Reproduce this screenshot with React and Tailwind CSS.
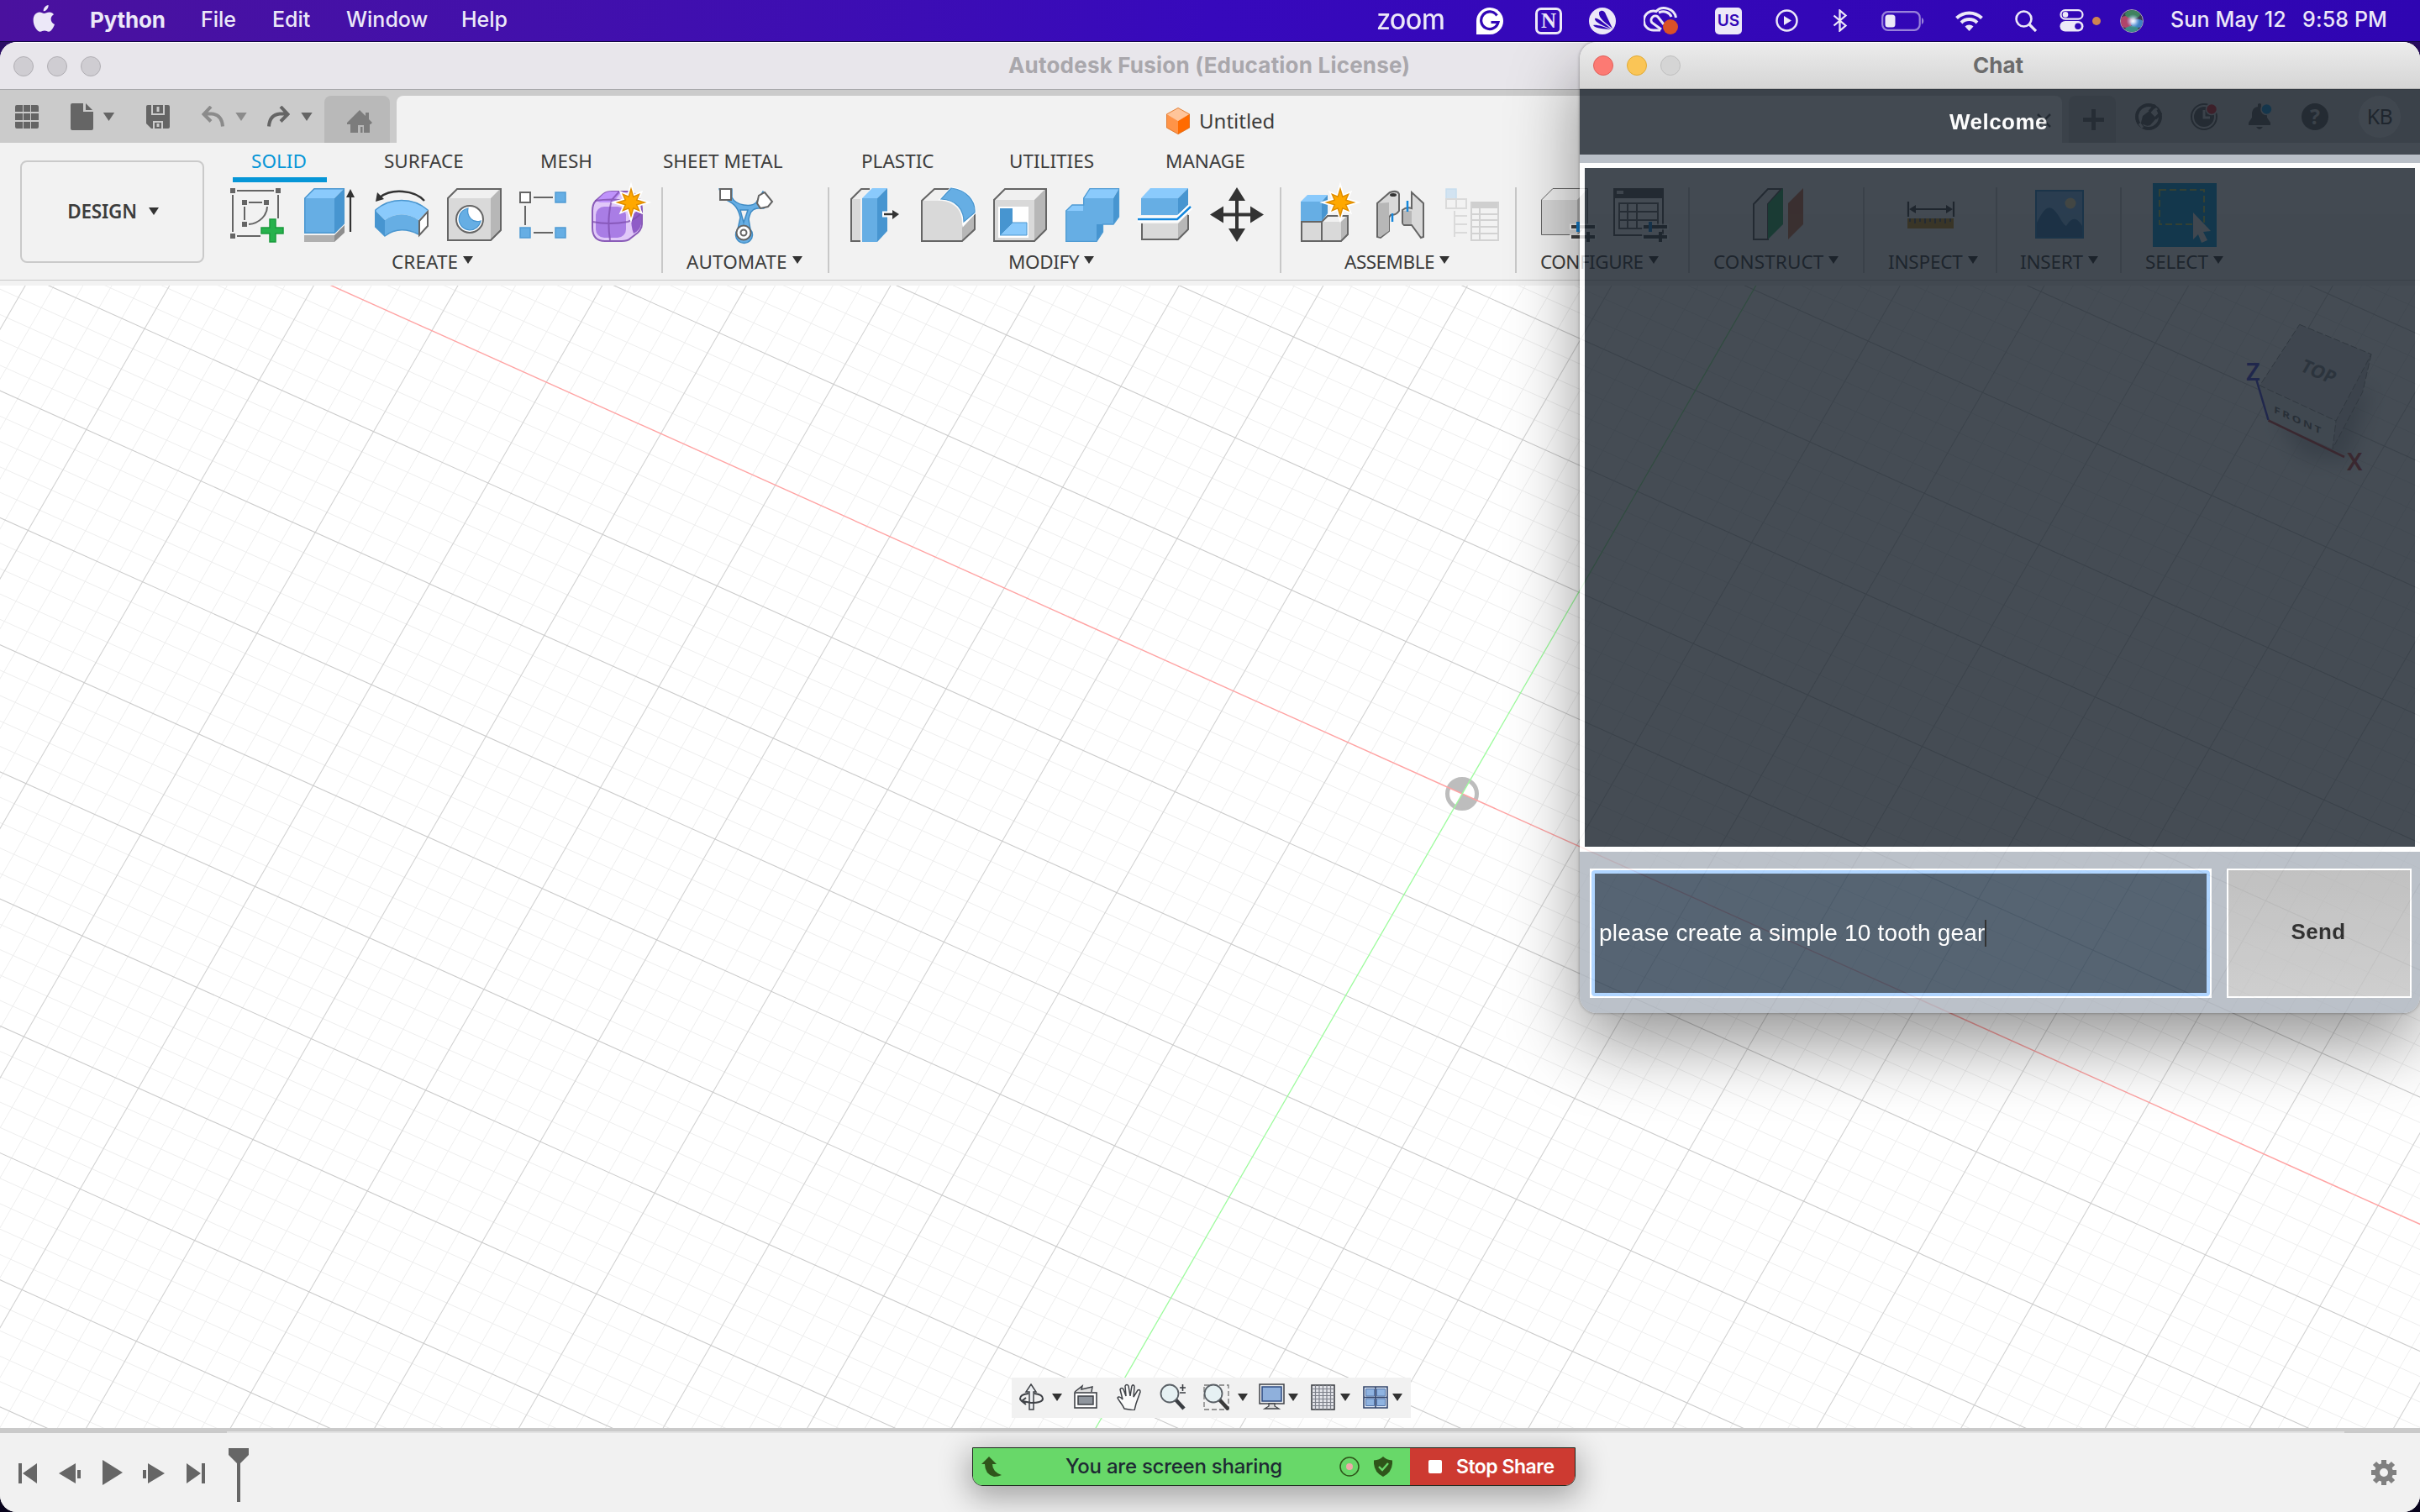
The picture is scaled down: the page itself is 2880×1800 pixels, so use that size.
import React from "react";

const MAC = "font-['Inter',sans-serif]";
const UI = "font-['Noto_Sans',sans-serif]";

/* ---------- menu bar ---------- */

const menus = [
  { label: "Python", cls: "w-[132px] text-[26px] font-bold tracking-[-0.2px]" },
  { label: "File", cls: "w-[85px] font-medium" },
  { label: "Edit", cls: "w-[88px] font-medium" },
  { label: "Window", cls: "w-[137px] font-medium" },
  { label: "Help", cls: "w-[100px] font-medium" },
];

function MenuBar() {
  return (
    <div className={`${MAC} flex h-[49px] shrink-0 items-center bg-gradient-to-r from-[#4a119e] via-[#3709bc] to-[#2f05b2] text-[25px] text-[#ece8f8]`}>
      <div className="flex h-full w-[107px] shrink-0 items-start pl-[39px] pt-[6px]">
        <svg className="h-[32px] w-[27px]" viewBox="0 0 27 32" fill="#ece8f8">
          <path d="M18.600 0c.3 3.800-2.700 7.300-5.900 7.300C12.300 3.800 15.500.4 18.600 0z" />
          <path d="M25 11.200c-2 1.200-3.400 3-3.400 5.600 0 3 1.800 5.200 4.400 6.200-1.300 4-4.200 8.700-7 8.700-1.900 0-2.700-1.200-5-1.200-2.400 0-3.300 1.200-5.100 1.200C5 31.700.6 24.500.6 18 .6 12 4.200 8.500 8 8.500c2.300 0 4.100 1.500 5.600 1.500 1.400 0 3.500-1.600 6.300-1.600 2 0 3.900 1 5.100 2.800z" />
        </svg>
      </div>
      {menus.map((m) => (
        <span key={m.label} className={`${m.cls} shrink-0 whitespace-nowrap pb-[2px]`}>{m.label}</span>
      ))}
      <div className="ml-auto flex h-full items-center">
        <span className="w-[118px] pb-[7px] font-['Lato',sans-serif] text-[36px] font-medium leading-none">
          <span className="inline-block origin-left scale-x-[0.93]">zoom</span>
        </span>
        <svg className="mr-[38px] h-[32px] w-[32px]" viewBox="0 0 32 32">
          <path d="M0 32V16A16 16 0 1 1 16 32z" fill="#fff" />
          <path d="M24.500 9.500A10.300 10.300 0 1 0 26 17.500H17.500" fill="none" stroke="#3107b6" strokeWidth="3.200" />
        </svg>
        <span className="mr-[32px] flex h-[32px] w-[32px] items-center justify-center rounded-[7px] border-[3px] border-[#ece8f8] font-['Liberation_Serif',serif] text-[25px] font-bold leading-none">N</span>
        <svg className="mr-[33px] h-[32px] w-[32px]" viewBox="0 0 32 32">
          <circle cx="16" cy="16" r="16" fill="#ece8f8" />
          <g fill="#3107b6">
            <path d="M12 5.500C15 2 19 4 20 8L28 25C20 18 11 13 12 5.500z" />
            <path d="M7 13c3-2 11 6 20 12.500C17 22 6 17 7 13z" />
            <path d="M5 21c4-1 12 1.500 21 5-8-1-18-.5-21-5z" />
          </g>
        </svg>
        <svg className="mr-[43px] h-[34px] w-[42px]" viewBox="0 0 42 34" fill="none" stroke="#ece8f8" strokeWidth="3">
          <path d="M20 28h-7A11.500 11.500 0 1 1 15 5.500C22-2 37 2 38.500 13" />
          <path d="M21 27l-11-8a5 5 0 0 1 7-7l7 9" />
          <path d="M18 7c7-3 13 0 15 5" />
          <circle cx="32" cy="24" r="9" fill="#da5128" stroke="none" />
        </svg>
        <span className="mr-[40px] flex h-[32px] w-[32px] items-center justify-center rounded-[5px] bg-[#ece8f8] text-[19px] font-semibold leading-none text-[#3107b6]">US</span>
        <svg className="mr-[41px] h-[27px] w-[27px]" viewBox="0 0 27 27">
          <circle cx="13.500" cy="13.500" r="12" fill="none" stroke="#ece8f8" strokeWidth="2.500" />
          <path d="M10 8l9 5.500-9 5.500z" fill="#ece8f8" />
        </svg>
        <svg className="mr-[40px] h-[27px] w-[18px]" viewBox="0 0 18 27" fill="none" stroke="#ece8f8" strokeWidth="2.300">
          <path d="M1.500 7.500l14 12-7 6V1.500l7 6-14 12" />
        </svg>
        <svg className="mr-[36px] h-[24px] w-[52px]" viewBox="0 0 52 24">
          <rect x="1.200" y="1.200" width="44.500" height="21.600" rx="6.500" fill="none" stroke="#ece8f8" strokeOpacity=".55" strokeWidth="2.200" />
          <rect x="4.500" y="4.500" width="12" height="15" rx="3.500" fill="#ece8f8" />
          <path d="M48 8c3 1.500 3 6.500 0 8z" fill="#ece8f8" fillOpacity=".55" />
        </svg>
        <svg className="mr-[38px] h-[24px] w-[33px]" viewBox="0 0 33 24" fill="none" stroke="#ece8f8" strokeWidth="4">
          <path d="M1.500 8.500a21.500 21.500 0 0 1 30 0" />
          <path d="M7 14a13.500 13.500 0 0 1 19 0" />
          <path d="M16.500 24l-5-5.400a7 7 0 0 1 10 0z" fill="#ece8f8" stroke="none" />
        </svg>
        <svg className="mr-[27px] h-[26px] w-[26px]" viewBox="0 0 26 26" fill="none" stroke="#ece8f8">
          <circle cx="10.500" cy="10.500" r="9" strokeWidth="2.600" />
          <path d="M17 17l8 8" strokeWidth="3.300" />
        </svg>
        <svg className="mr-[10px] h-[27px] w-[29px]" viewBox="0 0 29 27">
          <rect x="1.500" y="1.200" width="26" height="10.400" rx="5.200" fill="none" stroke="#ece8f8" strokeWidth="2.200" />
          <circle cx="7" cy="6.400" r="3.300" fill="#ece8f8" />
          <rect x=".5" y="14" width="28" height="12.500" rx="6.200" fill="#ece8f8" />
          <circle cx="22" cy="20.200" r="3.800" fill="#3107b6" />
        </svg>
        <span className="mr-[23px] h-[10px] w-[10px] rounded-full bg-[#cf8450]" />
        <svg className="mr-[32px] h-[28px] w-[28px]" viewBox="0 0 28 28">
          <defs>
            <clipPath id="orb">
              <circle cx="14" cy="14" r="13" />
            </clipPath>
            <radialGradient id="orbGlow">
              <stop offset="0" stopColor="#fff" />
              <stop offset=".35" stopColor="#e6efff" stopOpacity=".8" />
              <stop offset="1" stopColor="#9cc4ff" stopOpacity="0" />
            </radialGradient>
          </defs>
          <circle cx="14" cy="14" r="13.500" fill="#3c3a52" stroke="#a9a3bb" strokeWidth="1" />
          <g clipPath="url(#orb)">
            <ellipse cx="7" cy="15" rx="8" ry="7" fill="#c4476f" opacity=".85" />
            <ellipse cx="15" cy="6" rx="9" ry="5" fill="#3f8f62" opacity=".85" />
            <ellipse cx="21" cy="17" rx="8" ry="5" fill="#3f8fd8" opacity=".85" />
            <ellipse cx="14" cy="24" rx="8" ry="4" fill="#3c9c92" opacity=".85" />
            <circle cx="15.500" cy="14" r="8" fill="url(#orbGlow)" />
          </g>
        </svg>
        <span className="w-[157px] whitespace-nowrap pb-[2px] font-medium tracking-[0.15px]">Sun May 12</span>
        <span className="w-[140px] whitespace-nowrap pb-[2px] font-medium tracking-[0.15px]">9:58 PM</span>
      </div>
    </div>
  );
}

/* ---------- shared bits ---------- */

function Light({ cls }) {
  return <span className={`h-[24px] w-[24px] rounded-full border ${cls}`} />;
}

function Caret({ cls = "h-[9px] w-[12px] text-[#333]" }) {
  return (
    <svg className={`${cls} shrink-0`} viewBox="0 0 12 9" fill="currentColor">
      <path d="M0 0h12L6 9z" />
    </svg>
  );
}

function Icon({ children, w = 64, opacity }) {
  return (
    <svg width={w} height="66" viewBox={`0 0 ${w} 66`} className="shrink-0 overflow-visible" opacity={opacity}>
      {children}
    </svg>
  );
}

/* ---------- ribbon icons ---------- */

const BL = "#66aee4";
const BT = "#8acafc";
const BS = "#4795d0";
const GF = "#d9d9d9";
const GT = "#f0f0f0";
const GS = "#b7b7b7";
const ST = "#656565";

const Star = ({ x, y, r = 16 }) => {
  const pts = [];
  for (let i = 0; i < 16; i++) {
    const a = (Math.PI * i) / 8 - Math.PI / 2;
    const k = i % 2 ? r * 0.45 : i % 4 ? r * 0.85 : r;
    pts.push(`${(x + k * Math.cos(a)).toFixed(1)},${(y + k * Math.sin(a)).toFixed(1)}`);
  }
  return (
    <g>
      <polygon points={pts.join(" ")} fill="#fff" stroke="#fff" strokeWidth="5" />
      <polygon points={pts.join(" ")} fill="#ffa800" stroke="#e08e00" strokeWidth="1.500" />
    </g>
  );
};

const SketchIcon = () => (
  <Icon>
    <g fill={ST}>
      <path d="M0 1h6v6H0zM54 1h6v6h-6zM0 55h6v6H0zM14 15h6v6h-6zM40 15h6v6h-6zM14 41h6v6h-6z" />
    </g>
    <path d="M8 4h44M3 9v44M8 58h28M57 9v28M22 18h16M17 23v16M44 23c0 10-9 20-22 21" fill="none" stroke={ST} strokeWidth="2" />
    <path d="M47 38h7v10h9v7h-9v10h-7V55h-10v-7h10z" fill="#27b24d" stroke="#1a9a3d" strokeWidth="1.500" />
  </Icon>
);

const ExtrudeIcon = () => (
  <Icon>
    <path d="M2 57h36v8H2z" fill="#b0b0b0" />
    <path d="M38 57l12-12v9L38 65z" fill="#8e8e8e" />
    <path d="M2 13h36v42H2z" fill={BL} />
    <path d="M2 13L14 1h36L38 13z" fill={BT} />
    <path d="M38 13L50 1v42L38 55z" fill={BS} />
    <path d="M2.800 13v41.300H38L49.300 43V1.800H14z" fill="none" stroke="#4a96cf" strokeWidth="1.500" />
    <path d="M57 53V8" stroke="#333" strokeWidth="2.200" />
    <path d="M57 2l5 10H52z" fill="#333" />
  </Icon>
);

const RevolveIcon = () => (
  <Icon>
    <path d="M59 16C47 3 20 1 6 12" fill="none" stroke="#333" strokeWidth="2.500" />
    <path d="M1 17L3 6l8 8z" fill="#333" />
    <path d="M0 27C18 11 46 11 64 27L52 39C40 30 24 30 12 39z" fill={BT} />
    <path d="M12 39c12-9 28-9 40 0v17c-12-7-28-7-40 2z" fill={BL} />
    <path d="M0 27l12 12v19L0 47z" fill={BS} />
    <path d="M.8 27C18 11.500 46 11.500 63 27M.8 27v20L12 58c12-9 26-9 40-2" fill="none" stroke="#4a96cf" strokeWidth="1.500" />
    <path d="M53 40l10-11v17L53 57z" fill="#fff" stroke={ST} strokeWidth="2" />
  </Icon>
);

const Cube = ({ x = 0, y = 1, w = 52, h = 51, d = 12, f = GF, t = GT, s = GS, st = ST, sw = 2 }) => (
  <g>
    <path d={`M${x} ${y + d}h${w}v${h}h${-w}z`} fill={f} />
    <path d={`M${x} ${y + d}l${d} ${-d}h${w}l${-d} ${d}z`} fill={t} />
    <path d={`M${x + w} ${y + d}l${d} ${-d}v${h}l${-d} ${d}z`} fill={s} />
    <path d={`M${x + 1} ${y + d}v${h - 1}h${w - 1}l${d} ${-d}v${-h + 2}h${-w}z`} fill="none" stroke={st} strokeWidth={sw} />
  </g>
);

const HoleIcon = () => (
  <Icon>
    <Cube />
    <circle cx="27" cy="38" r="16" fill="#fff" stroke={ST} strokeWidth="2" />
    <path d="M25 25a13 13 0 1 0 15 15c-9 3-17-5-15-15z" fill={BL} stroke={BS} strokeWidth="1.200" />
  </Icon>
);

const PatternIcon = () => (
  <Icon>
    <path d="M17 12h23M7 22v23M17 54h23" stroke={ST} strokeWidth="2" />
    <rect x="1" y="6" width="12" height="12" fill="#fff" stroke={ST} strokeWidth="2" />
    <path d="M43 6h12v12H43zM1 48h12v12H1zM43 48h12v12H43z" fill={BL} stroke="#4f9bd3" strokeWidth="1.500" />
  </Icon>
);

const FormIcon = () => (
  <Icon>
    <path d="M14 8Q18 5 24 5H44Q60 8 60 28V44Q60 49 55 54L46 61Q43 64 36 64H16Q1 64 1 48V28Q1 20 5 16z" fill="#e0c8f8" stroke="#8a5cb8" strokeWidth="2" />
    <path d="M6 16l8-8q4-3 8-3h14l-10 13H10z" fill="#bf93fb" />
    <rect x="5" y="23" width="36" height="37" rx="10" fill="#a97de5" />
    <path d="M47 36q2-6 12-10v18q-1 7-9 11-3-8-3-19z" fill="#8f5cc7" />
    <path d="M1 41q20 4 42 0 12-4 17-12M22 63q-4-26 2-48l9-10M4 16q20-3 38 0" fill="none" stroke="#7c4cab" strokeOpacity=".75" strokeWidth="2" />
    <Star x={47} y={18} />
  </Icon>
);

const AutomateIcon = () => (
  <Icon>
    <path d="M4 13C16 18 22 22 25 36L22 50A10 10 0 1 0 37 50L35 38C37 26 42 24 53 25L62 18 52 5 44 18C38 24 20 22 15 12V2H0z" fill={BL} stroke="#3f8bc4" strokeWidth="1.500" />
    <path d="M25 27h9l-5 15z" fill="#f2f2f2" stroke="#3f8bc4" strokeWidth="1.500" />
    <rect x="1" y="2" width="13" height="13" fill="#fff" stroke={ST} strokeWidth="2" />
    <path d="M54 6l9 11-5 6-9 2-4-6 2-9z" fill="#fff" stroke={ST} strokeWidth="2" />
    <circle cx="29" cy="54" r="8.500" fill="#fff" stroke={ST} strokeWidth="2" />
    <circle cx="29" cy="54" r="3.500" fill="#fff" stroke={ST} strokeWidth="2" />
  </Icon>
);

const PressPullIcon = () => (
  <Icon>
    <path d="M3 14L15 1h10L14 14v50H3z" fill={GT} />
    <path d="M3 14h11v50H3z" fill={GF} />
    <path d="M14 64H3V14L15 2h10" fill="none" stroke={ST} strokeWidth="2" />
    <path d="M16 13h18v52H16z" fill={BL} />
    <path d="M16 13L28 1h18L34 13z" fill={BT} />
    <path d="M34 13L46 1v51L34 65z" fill={BS} />
    <path d="M40 32h16" stroke="#fff" strokeWidth="7" />
    <path d="M42 32h10" stroke="#333" strokeWidth="2.500" />
    <path d="M52 27l8 5-8 6z" fill="#333" />
  </Icon>
);

const FilletIcon = () => (
  <Icon>
    <path d="M1 16h24q26 4 24 32v16H1z" fill={GF} />
    <path d="M1 16L16 2h20L24 16z" fill={GT} />
    <path d="M49 46L64 32v19L49 64z" fill={GS} />
    <path d="M34 2H16L1 16v48h48l15-14V31" fill="none" stroke={ST} strokeWidth="2" />
    <path d="M24 14L36 1C54 3 65 16 64 30L51 44C51 26 42 15 24 14z" fill={BL} stroke="#fff" strokeWidth="3" />
    <path d="M24 14L36 1C54 3 65 16 64 30L51 41C51 26 42 15 24 14z" fill={BL} stroke="#4a96cf" strokeWidth="1.200" />
  </Icon>
);

const ShellIcon = () => (
  <Icon>
    <Cube x={0} w={49} h={50} d={14} y={1} />
    <path d="M6 23h36v37H6z" fill="#fff" />
    <path d="M8 25h15v17L8 57z" fill={BS} />
    <path d="M8 57l15-15h17v15z" fill={BT} stroke="#4a96cf" strokeWidth="1" />
  </Icon>
);

const CombineIcon = () => (
  <Icon>
    <path d="M0 28h21V13h36v31H44v9L37 65H0z" fill={BL} />
    <path d="M21 13L29 1h35l-7 12zM0 28l8-7h13v7z" fill={BT} />
    <path d="M57 13l7-12v34l-7 9zM37 44h8v9l-8 12z" fill={BS} />
    <path d="M.7 28v36.300H37L44.500 53v-9H57l6.500-9V1.700H29L21.700 13v8H8z" fill="none" stroke="#4f9bd3" strokeWidth="1.300" />
  </Icon>
);

const SplitIcon = () => (
  <Icon>
    <path d="M4 13h44v20H4z" fill={BL} />
    <path d="M4 13L15 1h45L48 13z" fill={BT} />
    <path d="M48 13L60 1v20L48 33z" fill={BS} />
    <path d="M4 43h44v19H4z" fill={GF} />
    <path d="M48 43l12-12v19L48 62z" fill={GS} />
    <path d="M5 43v19h43l12-12V33" fill="none" stroke={ST} strokeWidth="2" />
    <path d="M0 38h47l16-15" fill="none" stroke="#fff" strokeWidth="7" />
    <path d="M0 38h47l16-15" fill="none" stroke="#1487dc" strokeWidth="2.500" />
  </Icon>
);

const MoveIcon = () => (
  <Icon>
    <path d="M32 10v45M10 32.500h44" stroke="#333" strokeWidth="4" />
    <path d="M32 0l10 16H22zM32 65l10-16H22zM0 32.500l16-10v20zM64 32.500l-16-10v20z" fill="#333" />
  </Icon>
);

const ComponentIcon = () => (
  <Icon>
    <Cube x={24} y={33} w={24} h={24} d={8} />
    <path d="M1 41h24v23H1z" fill={GF} stroke={ST} strokeWidth="2" />
    <path d="M0 17h25v23H0z" fill={BL} />
    <path d="M0 17l8-8h24l-7 8z" fill={BT} />
    <path d="M25 17l7-8v22l-7 9z" fill={BS} />
    <Star x={47} y={18} />
  </Icon>
);

const JointIcon = () => (
  <Icon>
    <path d="M5 19L20 6q9-3 11 2v20q-3 5-10 5l-2 3v16L9 60l-4-1z" fill={GF} stroke={ST} strokeWidth="2" />
    <path d="M6 19l13-1v34L9 59l-3-1z" fill={GS} />
    <ellipse cx="24" cy="9" rx="4" ry="2" fill="#333" />
    <path d="M23 31v10" stroke="#1487dc" strokeWidth="2.500" />
    <path d="M46 10V6l14 13v40l-3 1-11-15H37q-2-1-2-3V27q5-4 11-2z" fill={GF} stroke={ST} strokeWidth="2" />
    <path d="M36 28h10v16h-8q-2 0-2-3z" fill={GS} />
    <path d="M41 16v13" stroke="#1487dc" strokeWidth="2.500" />
  </Icon>
);

const BomIcon = () => (
  <Icon opacity=".9">
    <rect x="1" y="2" width="12" height="12" fill="#cfe2f1" stroke="#c3dcee" strokeWidth="1.500" />
    <path d="M1 14h24v11H1zM13 14v11M11 28v31M11 34h15M11 44h15M11 54h15" fill="none" stroke="#d8d8d8" strokeWidth="2" />
    <path d="M30 17h34v8H30z" fill="#cbcbcb" />
    <path d="M31 18v45h32V18M41 25v38M31 32h32M31 39h32M31 47h32M31 55h32" fill="none" stroke="#cfcfcf" strokeWidth="2" />
  </Icon>
);

const Sliders = () => (
  <g>
    <path d="M34 47h32M34 59h32" stroke="#fff" strokeOpacity=".8" strokeWidth="7" />
    <path d="M36 47h28M36 59h28M56 53v12" stroke="#444" strokeWidth="4" />
    <path d="M44 41v12" stroke="#1480d0" strokeWidth="4" />
  </g>
);

const ConfigureIcon = () => (
  <Icon>
    <path d="M0 15L14 1h42v42L43 57H0z" fill={GF} />
    <path d="M0 15L14 1h42L43 15z" fill={GT} />
    <path d="M43 15L56 1v42L43 57z" fill={GS} />
    <path d="M.5 15L14 1.500h41.500V43L43 56.500H.5z" fill="none" stroke={ST} strokeWidth="1" />
    <Sliders />
  </Icon>
);

const ConfigTableIcon = () => (
  <Icon>
    <path d="M1 2h58v55H1z" fill="#fff" fillOpacity=".4" stroke="#555" strokeWidth="2" />
    <path d="M0 1h60v12H0z" fill="#555" />
    <path d="M4 4h8v4H4z" fill="#ddd" />
    <path d="M7 19h46v30H7zM7 29h46M7 39h46M17 19v30M28 19v30" fill="none" stroke="#666" strokeWidth="2" />
    <Sliders />
  </Icon>
);

const PlaneIcon = () => (
  <Icon>
    <path d="M3 20L20 2h16L20 20v42H3z" fill="#ececec" stroke="#555" strokeWidth="2" />
    <path d="M20 20L38 1v43L20 62z" fill="#28a860" />
    <path d="M44 19L62 1v43L44 62z" fill="#c8714c" />
  </Icon>
);

const MeasureIcon = () => (
  <Icon>
    <path d="M5 17v18M59 17v18M12 26h40" stroke="#444" strokeWidth="2.200" />
    <path d="M6 26l8-5v10zM58 26l-8-5v10z" fill="#444" />
    <path d="M4 37h55v12H4z" fill="#c68b1e" />
    <path d="M7 37v4M13 37v6M19 37v4M25 37v6M31 37v4M37 37v6M43 37v4M49 37v6M55 37v4" stroke="#555" strokeWidth="2" />
  </Icon>
);

const PictureIcon = () => (
  <Icon>
    <path d="M3 4h56v56H3z" fill="#79b6e8" stroke="#2e89c8" strokeWidth="2" />
    <path d="M4 42C14 22 20 18 30 34q6 11 9 12c6-10 12-12 19 0v13H4z" fill="#3579b2" />
    <circle cx="44" cy="19" r="6.500" fill="#f0dfa8" />
  </Icon>
);

const SelectIcon = () => (
  <span className="-mx-[6px] -mt-[5px] flex h-[76px] w-[76px] shrink-0 bg-[#0696d7] pl-[6px] pt-[5px]">
    <Icon>
      <path d="M2 3h53v41H2z" fill="none" stroke="#a8c65a" strokeWidth="2" strokeDasharray="8 4" />
      <path d="M42 30l21 22-9 1 5 10-7 3-4-10-6 6z" fill="#e8e8e8" />
    </Icon>
  </span>
);

const groups = [
  { label: "CREATE", w: "w-[536px]", pad: "pl-[21px]", lab: "pl-[213px]", track: "tracking-[0.1px]", icons: [SketchIcon, ExtrudeIcon, RevolveIcon, HoleIcon, PatternIcon, FormIcon] },
  { label: "AUTOMATE", w: "w-[198px]", pad: "pl-[67px]", lab: "pl-[28px]", track: "tracking-[0.1px]", icons: [AutomateIcon] },
  { label: "MODIFY", w: "w-[538px]", pad: "pl-[23px]", lab: "pl-[213px]", track: "tracking-[-0.4px]", icons: [PressPullIcon, FilletIcon, ShellIcon, CombineIcon, SplitIcon, MoveIcon] },
  { label: "ASSEMBLE", w: "w-[280px]", pad: "pl-[23px]", lab: "pl-[75px]", track: "tracking-[-0.5px]", icons: [ComponentIcon, JointIcon, BomIcon] },
  { label: "CONFIGURE", w: "w-[206px]", pad: "pl-[29px]", lab: "pl-[28px]", track: "tracking-[-0.5px]", icons: [ConfigureIcon, ConfigTableIcon] },
  { label: "CONSTRUCT", w: "w-[208px]", pad: "pl-[73px]", lab: "pl-[28px]", track: "tracking-[0.1px]", icons: [PlaneIcon] },
  { label: "INSPECT", w: "w-[158px]", pad: "pl-[47px]", lab: "pl-[28px]", track: "tracking-[-0.2px]", icons: [MeasureIcon] },
  { label: "INSERT", w: "w-[148px]", pad: "pl-[43px]", lab: "pl-[27px]", track: "tracking-[-0.2px]", icons: [PictureIcon] },
  { label: "SELECT", w: "w-[300px]", pad: "pl-[43px]", lab: "pl-[28px]", track: "tracking-[-0.2px]", icons: [SelectIcon], last: true },
];

const tabs = [
  { label: "SOLID", w: "w-[158px]", active: true },
  { label: "SURFACE", w: "w-[186px]" },
  { label: "MESH", w: "w-[146px]" },
  { label: "SHEET METAL", w: "w-[236px]" },
  { label: "PLASTIC", w: "w-[176px]" },
  { label: "UTILITIES", w: "w-[186px]" },
  { label: "MANAGE", w: "w-[120px]" },
];

function DocumentBar() {
  return (
    <div className="flex h-[63px] shrink-0 bg-[#cbcbcb]">
      <div className="flex w-[386px] shrink-0 items-center pl-[18px] text-[#656565]">
        <svg className="mr-[38px] h-[28px] w-[28px] shrink-0" viewBox="0 0 28 28" fill="currentColor">
          <path d="M2 0h7v8H0V2q0-2 2-2zM10 0h8v8h-8zM19 0h7q2 0 2 2v6h-9zM0 10h9v8H0zM10 10h8v8h-8zM19 10h9v8h-9zM0 20h9v8H2q-2 0-2-2zM10 20h8v8h-8zM19 20h9v6q0 2-2 2h-7z" />
        </svg>
        <svg className="mr-[11px] h-[32px] w-[27px] shrink-0" viewBox="0 0 27 32" fill="currentColor">
          <path d="M2 0h13v10h12v20q0 2-2 2H2q-2 0-2-2V2q0-2 2-2z" />
          <path d="M18 0l8 8h-8z" />
        </svg>
        <Caret cls="mr-[37px] h-[10px] w-[15px]" />
        <svg className="mr-[38px] h-[28px] w-[28px] shrink-0" viewBox="0 0 28 28">
          <path d="M2 0h24q2 0 2 2v24q0 2-2 2H6l-6-6V2q0-2 2-2z" fill="currentColor" />
          <path d="M7 0v11h14V0M9 28v-8h10v8" fill="none" stroke="#cbcbcb" strokeWidth="2" />
          <path d="M14 2v6M14 22v4" stroke="#cbcbcb" strokeWidth="3" />
        </svg>
        <svg className="mr-[13px] h-[25px] w-[27px] shrink-0 text-[#8b8b8b]" viewBox="0 0 27 25" fill="none" stroke="currentColor" strokeWidth="4">
          <path d="M11 1L2.500 10 11 18.500M3 9.500h9q12 1 13 15" />
        </svg>
        <Caret cls="mr-[24px] h-[10px] w-[14px] text-[#8b8b8b]" />
        <svg className="mr-[13px] h-[25px] w-[27px] shrink-0" viewBox="0 0 27 25" fill="none" stroke="currentColor" strokeWidth="4">
          <path d="M16 1l8.500 9L16 18.500M24 9.500h-9Q3 10.500 2 24.500" />
        </svg>
        <Caret cls="h-[10px] w-[14px]" />
      </div>
      <div className="mr-[8px] mt-[7px] flex w-[78px] shrink-0 items-center justify-center rounded-t-[8px] bg-[#b9b9b9] pl-[6px] pt-[4px]">
        <svg className="h-[27px] w-[30px]" viewBox="0 0 30 27" fill="#7c7c7c">
          <path d="M15 0l7 7V3h4v8l4 4-2 2h-1v10h-7v-9h-7v9H4V17H0v-2zM16 20h2.500v7H16z" />
        </svg>
      </div>
      <div className="mt-[7px] flex w-[1982px] shrink-0 items-center rounded-t-[8px] bg-[#f2f2f2] pl-[916px] pt-[3px]">
        <svg className="mr-[11px] h-[32px] w-[28px]" viewBox="0 0 28 32">
          <path d="M14 0l14 7.500L14 16 0 7.500z" fill="#ffc59a" />
          <path d="M0 7.500L14 16v16L0 24z" fill="#ff9448" />
          <path d="M28 7.500L14 16v16l14-8z" fill="#ff6b00" />
          <path d="M14 .5l13.500 7.500v16L14 31.500.5 24V8z" fill="none" stroke="#d9752a" strokeWidth=".8" />
        </svg>
        <span className={`${UI} pt-[1px] text-[24px] leading-none text-[#3c3c3c]`}>Untitled</span>
        <svg className="ml-auto mr-[13px] h-[17px] w-[17px]" viewBox="0 0 17 17" stroke="#555" strokeWidth="2.500">
          <path d="M1 1l15 15M16 1L1 16" />
        </svg>
      </div>
      <div className="ml-[8px] mt-[7px] flex w-[56px] shrink-0 items-center justify-center rounded-t-[8px] bg-[#b9b9b9] pl-[3px] text-[#656565]">
        <svg className="h-[25px] w-[25px]" viewBox="0 0 25 25" stroke="currentColor" strokeWidth="5">
          <path d="M12.500 0v25M0 12.500h25" />
        </svg>
      </div>
      <div className="ml-[23px] flex flex-1 items-center text-[#5a5a5a]">
        <svg className="mr-[34px] h-[32px] w-[32px] shrink-0" viewBox="0 0 32 32">
          <circle cx="16" cy="16" r="14" fill="none" stroke="currentColor" strokeWidth="4" />
          <path d="M6 27L9 15l8-6 8 9-7 8q-4 2-8-1l-3 4z" fill="currentColor" />
          <path d="M17 10l7-8M24 18l7-7" stroke="currentColor" strokeWidth="3.500" />
          <path d="M20 12l6-6M5 24l4 5" stroke="#cbcbcb" strokeWidth="3" />
        </svg>
        <svg className="mr-[34px] h-[32px] w-[32px] shrink-0 overflow-visible" viewBox="0 0 32 32">
          <circle cx="16" cy="16" r="15" fill="none" stroke="currentColor" strokeWidth="2" />
          <circle cx="16" cy="16" r="12" fill="currentColor" />
          <path d="M16 8v9h7" fill="none" stroke="#cbcbcb" strokeWidth="3" />
          <circle cx="25" cy="7" r="6.500" fill="#d52330" stroke="#cbcbcb" strokeWidth="1.500" />
        </svg>
        <svg className="mr-[34px] h-[32px] w-[32px] shrink-0 overflow-visible" viewBox="0 0 32 32">
          <path d="M3 26v-3l4-6v-6q1-6 7-7V1q2-2 4 0v3q6 1 7 7v6l4 6v3zM12 28h8q-4 6-8 0z" fill="currentColor" />
          <circle cx="24.500" cy="7" r="6.500" fill="#1193d6" stroke="#cbcbcb" strokeWidth="1.500" />
        </svg>
        <span className={`${UI} mr-[36px] flex h-[32px] w-[32px] shrink-0 items-center justify-center rounded-full bg-[#5a5a5a] text-[25px] font-bold leading-none text-[#cbcbcb]`}>?</span>
        <span className={`${UI} flex h-[50px] w-[50px] shrink-0 items-center justify-center rounded-full bg-[#e6e6e6] text-[25px] leading-none tracking-[-0.5px] text-[#444]`}>KB</span>
      </div>
    </div>
  );
}

function Ribbon() {
  return (
    <div className="shrink-0 bg-[#f2f2f2]">
      <div className="flex h-[164px] border-b-[1.500px] border-[#c9c9c9]">
        <div className={`${UI} ml-[24px] mr-[34px] mt-[21px] flex h-[122px] w-[219px] items-center justify-center gap-[14px] rounded-[8px] border-2 border-[#cacaca] pb-[1px] pl-[2px] text-[22.500px] font-semibold text-[#3c3c3c]`}>
          <span className="tracking-[-0.2px]">DESIGN</span>
          <Caret />
        </div>
        <div className="flex-1 pt-[4px]">
          <div className={`${UI} flex h-[43px] text-[22.500px] leading-[35px] text-[#3c3c3c]`}>
            {tabs.map((t) => (
              <div key={t.label} className={`${t.w} shrink-0 whitespace-nowrap`}>
                {t.active ? (
                  <div className="h-[43px] w-[112px] border-b-[6px] border-[#0696d7] pr-[2px] text-center text-[#0696d7]">{t.label}</div>
                ) : (
                  <span className="pl-[22px]">{t.label}</span>
                )}
              </div>
            ))}
          </div>
          <div className="-ml-[24px] flex h-[104px] pt-[6px]">
            {groups.map((g) => (
              <div key={g.label} className={`${g.w} ${g.last ? "" : "border-r-2"} h-[102px] shrink-0 border-[#c8c8c8]`}>
                <div className={`${g.pad} flex h-[79px] gap-[22px]`}>
                  {g.icons.map((I, i) => (
                    <I key={i} />
                  ))}
                </div>
                <div className={`${g.lab} ${UI} flex items-center gap-[6px] text-[22.500px] leading-[10px] text-[#3c3c3c]`}>
                  <span className={`${g.track} whitespace-nowrap pt-[5px]`}>{g.label}</span>
                  <Caret />
                </div>
              </div>
            ))}
          </div>
        </div>
      </div>
      <div className="h-[6px]" />
    </div>
  );
}

/* ---------- 3D viewport ---------- */

const O = [1740.2, 945];
const A = [136.25, 61.25];
const B = [-69.35, 120.05];

function line(p, d, len) {
  return `M${(p[0] - d[0] * len).toFixed(1)} ${(p[1] - d[1] * len).toFixed(1)}L${(p[0] + d[0] * len).toFixed(1)} ${(p[1] + d[1] * len).toFixed(1)}`;
}

function family(step, dir, major) {
  const out = [];
  for (let i = -110; i <= 110; i++) {
    if (i === 0 || (i % 5 === 0) !== major) continue;
    out.push(line([O[0] + (step[0] * i) / 5, O[1] + (step[1] * i) / 5], dir, 40));
  }
  return out.join("");
}

const minorGrid = family(A, B, false) + family(B, A, false);
const majorAcross = family(A, B, true);
const majorAlong = family(B, A, true);

function Viewport() {
  return (
    <svg className="block h-[1360px] w-[2880px] shrink-0 bg-white" viewBox="0 340 2880 1360">
      <path d={minorGrid} stroke="#eeeeee" strokeWidth="1" fill="none" />
      <path d={majorAcross} stroke="#d3d3d3" strokeWidth="1.100" fill="none" />
      <path d={majorAlong} stroke="#cbcbcb" strokeWidth="1.100" fill="none" />
      <circle cx="1740" cy="945" r="17.500" fill="#fff" fillOpacity=".8" stroke="#bdbdbd" strokeWidth="5" />
      <path d="M1740 945L1724 938A17.500 17.500 0 0 1 1748.500 930zM1740 945L1756 952A17.500 17.500 0 0 1 1731.500 960z" fill="#bdbdbd" />
      <path d={line(O, A, 20)} stroke="#ffa3a3" strokeWidth="1.400" />
      <path d={line(O, B, 20)} stroke="#9dfb9d" strokeWidth="1.300" />
      <defs>
        <filter id="soft" x="-50%" y="-50%" width="200%" height="200%">
          <feGaussianBlur stdDeviation="12" />
        </filter>
      </defs>
      <path d="M2710 500L2822 460 2795 550 2740 545z" fill="#8a8f95" opacity=".5" filter="url(#soft)" />
      <path d="M2736.700 386.300L2822 421.700 2780 501 2689.300 459z" fill="#e0e2e4" />
      <path d="M2689.300 459L2780 501 2776 534.300 2699.300 500.700z" fill="#e8e9ea" />
      <path d="M2822 421.700L2811.700 466.700 2776 534.300 2780 501z" fill="#d2d4d6" />
      <path d="M2736.700 386.300L2822 421.700 2780 501 2689.300 459zM2822 421.700L2811.700 466.700 2776 534.300 2780 501" fill="none" stroke="#9a9a9a" strokeWidth="1" strokeDasharray="8 3" />
      <g className="font-['Noto_Sans',sans-serif] font-bold" fill="#84888e">
        <text fontSize="22" transform="matrix(.9 .38 -.5 .87 2736 441)">TOP</text>
        <text fontSize="13.500" letterSpacing="2.600" transform="matrix(1 .46 -.05 .8 2706 491)" fill="#6e6e6e">FRONT</text>
      </g>
      <path d="M2685 451L2699.500 500" stroke="#4646d8" strokeWidth="2.500" />
      <path d="M2699.500 500.500L2790 544" stroke="#c84a4a" strokeWidth="2.500" />
      <g className="font-['Noto_Sans',sans-serif] font-semibold" fontSize="29">
        <text x="2673" y="453" fill="#4646d8">Z</text>
        <text x="2793" y="560" fill="#c84a4a">X</text>
      </g>
    </svg>
  );
}

function NavBar() {
  const k = { fill: "none", stroke: "#3f4247", strokeWidth: 2 };
  return (
    <div className="absolute left-[1204px] top-[1640px] flex h-[48px] w-[475px] items-center bg-[#f1f1f1] pb-[2px] pl-[8px]">
      <svg className="h-[32px] w-[31px]" viewBox="0 0 31 32">
        <path d="M15 1l6 9h-3v21h-5V10H9z" fill="#eef0f3" stroke="#3f4247" strokeWidth="1.500" />
        <path d="M19 12q10 1 10 6 0 5-14 5l-10-2M12 12q-10 1-10 6 0 2 3 3M9 17l-5 4 5 4" {...k} />
      </svg>
      <Caret cls="ml-[9px] h-[9px] w-[12px] text-[#333]" />
      <svg className="ml-[14px] h-[30px] w-[28px]" viewBox="0 0 28 30">
        <path d="M1 9L10 2l-1 4 13-3-1 6" fill="#ddd" stroke="#3f4247" strokeWidth="1.500" />
        <rect x="1" y="10" width="26" height="18" fill="#fff" stroke="#3f4247" strokeWidth="1.600" />
        <rect x="5" y="14" width="18" height="10" fill="#8f959d" stroke="#3f4247" strokeWidth="1.500" />
      </svg>
      <svg className="ml-[23px] h-[32px] w-[31px]" viewBox="0 0 31 32">
        <path d="M9 30C7 25 2 20 1 17c1-2 4-1 6 2L4 7c1-2 3-2 4 0l3 8-1-12c1-2 3-2 4 0l2 12 2-12c1-2 3-1 3 1l-1 12 5-8c2-1 3 0 3 2l-5 14-2 8z" fill="#fafafa" stroke="#3f4247" strokeWidth="1.500" />
      </svg>
      <svg className="ml-[20px] h-[32px] w-[31px]" viewBox="0 0 31 32">
        <path d="M18 18l11 12" stroke="#3a3d42" strokeWidth="4.500" />
        <circle cx="12" cy="12" r="10.500" fill="#e6f1f3" stroke="#5a6066" strokeWidth="1.800" />
        <path d="M24 5h7M27.500 1v8M24 11h7" stroke="#3a3d42" strokeWidth="1.600" />
      </svg>
      <svg className="ml-[21px] h-[32px] w-[31px]" viewBox="0 0 31 32">
        <rect x="1" y="2" width="29" height="29" fill="none" stroke="#777" strokeWidth="1.300" strokeDasharray="6 3" />
        <path d="M19 19l11 12" stroke="#3a3a3a" strokeWidth="4.500" />
        <circle cx="12" cy="12" r="10.500" fill="#e6f1f3" stroke="#5a6066" strokeWidth="1.800" />
      </svg>
      <Caret cls="ml-[10px] h-[9px] w-[12px] text-[#333]" />
      <svg className="ml-[13px] h-[32px] w-[31px]" viewBox="0 0 31 32">
        <rect x="1" y="1" width="29" height="23" fill="#eef0f2" stroke="#3f4247" strokeWidth="1.500" />
        <rect x="4" y="4" width="23" height="17" fill="#8fb0dc" stroke="#2d4a80" strokeWidth="1.500" />
        <path d="M12 24h7v3l5 3H7l5-3z" fill="#ddd" stroke="#3f4247" strokeWidth="1.300" />
      </svg>
      <Caret cls="ml-[4px] h-[9px] w-[12px] text-[#333]" />
      <svg className="ml-[15px] h-[31px] w-[29px]" viewBox="0 0 29 31">
        <rect x="1" y="1" width="27" height="29" fill="#e3e4e9" stroke="#3f4247" strokeWidth="1.600" />
        <path d="M5.500 1v29M10 1v29M14.500 1v29M19 1v29M23.500 1v29M1 5.500h27M1 9.500h27M1 13.500h27M1 17.500h27M1 21.500h27M1 25.500h27" stroke="#7c808a" strokeWidth="1.200" />
      </svg>
      <Caret cls="ml-[6px] h-[9px] w-[12px] text-[#333]" />
      <svg className="ml-[15px] h-[27px] w-[30px]" viewBox="0 0 30 27">
        <path d="M1 1h28v25H1z" fill="#dfe8f5" stroke="#33456b" strokeWidth="1.600" />
        <path d="M3.500 3.500h10v8.500h-10zM16.500 3.500h10v8.500h-10zM3.500 15h10v8.500h-10zM16.500 15h10v8.500h-10z" fill="#8fb3e0" stroke="#5577ac" strokeWidth="1" />
        <path d="M15 1v25M1 13.500h28" stroke="#33456b" strokeWidth="1.600" />
      </svg>
      <Caret cls="ml-[5px] h-[9px] w-[12px] text-[#333]" />
    </div>
  );
}

function Timeline() {
  return (
    <div className="flex-1 bg-[#f1f1f1]">
      <div className="flex h-[6px] bg-[#cacaca]">
        <span className="ml-[270px] mt-[4px] h-[2px] w-[2520px] bg-[#e2e2e2]" />
      </div>
      <div className="flex items-start pt-[18px] text-[#666]">
        <svg className="ml-[22px] mr-[26px] mt-[18px] h-[24px] w-[22px]" viewBox="0 0 22 24" fill="currentColor">
          <path d="M0 0h4v24H0zM22 0v24L5 12z" />
        </svg>
        <svg className="mr-[26px] mt-[18px] h-[24px] w-[26px]" viewBox="0 0 26 24" fill="currentColor">
          <path d="M20 0v24L0 12zM22 8h4v10h-4z" />
        </svg>
        <svg className="mr-[24px] mt-[14px] h-[30px] w-[24px]" viewBox="0 0 24 30" fill="currentColor">
          <path d="M0 0l24 15L0 30z" />
        </svg>
        <svg className="mr-[26px] mt-[18px] h-[24px] w-[26px]" viewBox="0 0 26 24" fill="currentColor">
          <path d="M0 8h4v10H0zM6 0l20 12L6 24z" />
        </svg>
        <svg className="mr-[28px] mt-[18px] h-[24px] w-[22px]" viewBox="0 0 22 24" fill="currentColor">
          <path d="M0 0l17 12L0 24zM18 0h4v24h-4z" />
        </svg>
        <svg className="h-[64px] w-[24px]" viewBox="0 0 24 64" fill="currentColor">
          <path d="M0 0h24v8L14 18v46h-4V18L0 8z" />
        </svg>
        <svg className="ml-auto mr-[28px] mt-[14px] h-[30px] w-[30px] text-[#808080]" viewBox="0 0 30 30">
          <circle cx="15" cy="15" r="8" fill="none" stroke="currentColor" strokeWidth="6" />
          <path d="M15 0v6M15 24v6M0 15h6M24 15h6M4 4l4 4M22 22l4 4M26 4l-4 4M8 22l-4 4" stroke="currentColor" strokeWidth="6" />
        </svg>
      </div>
    </div>
  );
}

function ShareBar() {
  return (
    <div className={`${MAC} absolute left-[1157px] top-[1723px] flex h-[46px] w-[718px] overflow-visible rounded-b-[12px] border-[1.500px] border-[#1f2a1f] text-[24px] shadow-[0_10px_36px_4px_rgba(0,0,0,0.32)]`}>
      <div className="flex h-full w-[520px] items-center rounded-bl-[11px] bg-[#68d869] text-[#1e2a33]">
        <svg className="ml-[10px] h-[24px] w-[24px]" viewBox="0 0 24 24" fill="#2f551a">
          <path d="M9 0l9 9h-5q0 9 11 13-4 2-9 2Q4 21 4 9H0z" />
        </svg>
        <span className="ml-[76px] w-[260px] whitespace-nowrap font-medium tracking-[-0.25px]">You are screen sharing</span>
        <svg className="ml-[66px] h-[24px] w-[24px]" viewBox="0 0 24 24">
          <circle cx="12" cy="12" r="11" fill="none" stroke="#2f551a" strokeWidth="1.500" />
          <circle cx="12" cy="12" r="4" fill="#eea9a9" />
        </svg>
        <svg className="ml-[17px] h-[24px] w-[22px]" viewBox="0 0 22 24">
          <path d="M11 0q4 4 11 4.500 1 14-11 19.500Q-1 18.500 0 4.500 7 4 11 0z" fill="#2f551a" />
          <path d="M6 12l4 4 7-8" fill="none" stroke="#68d869" strokeWidth="2.400" />
        </svg>
      </div>
      <div className="flex h-full flex-1 items-center rounded-br-[11px] bg-[#cd3a31] text-white">
        <span className="ml-[22px] h-[16px] w-[16px] rounded-[2px] bg-white" />
        <span className="ml-[17px] whitespace-nowrap text-[23px] font-semibold tracking-[-0.5px]">Stop Share</span>
      </div>
    </div>
  );
}

function FusionWindow() {
  return (
    <div className="flex h-[1750px] w-[2880px] shrink-0 flex-col overflow-hidden rounded-[20px] bg-[#f2f2f2]">
      <div className="flex h-[57px] shrink-0 items-center border-b-[1.500px] border-t border-b-[#a8a8ab] border-t-white bg-[#e8e6eb] pl-[16px]">
        <div className="flex w-[1184px] gap-[16px]">
          <Light cls="border-[#b0aeb3] bg-[#cfcdd2]" />
          <Light cls="border-[#b0aeb3] bg-[#cfcdd2]" />
          <Light cls="border-[#b0aeb3] bg-[#cfcdd2]" />
        </div>
        <span className={`${MAC} whitespace-nowrap pb-[2px] text-[26px] font-bold tracking-[0.2px] text-[#a9a7ac]`}>Autodesk Fusion (Education License)</span>
      </div>
      <DocumentBar />
      <Ribbon />
      <Viewport />
      <Timeline />
    </div>
  );
}

/* ---------- chat window ---------- */

function ChatWindow() {
  return (
    <div className="absolute left-[1880px] top-[50px] flex h-[1156px] w-[1000px] flex-col overflow-hidden rounded-[20px]">
      <div className={`${MAC} flex h-[56px] shrink-0 items-center border-b-[1.500px] border-t border-b-[#b5b5b5] border-t-white bg-gradient-to-b from-[#ececec] to-[#d5d5d5] pl-[16px]`}>
        <div className="flex w-[452px] gap-[16px]">
          <Light cls="border-[#e0605a] bg-[#fc7a73]" />
          <Light cls="border-[#e0aa35] bg-[#fac556]" />
          <Light cls="border-[#bfbfbf] bg-[#d5d5d5]" />
        </div>
        <span className="pb-[1px] text-[26px] font-bold text-[#6c6c6c]">Chat</span>
      </div>
      <div className="flex flex-1 flex-col bg-[#abb2bc] font-['Liberation_Sans',Arial,sans-serif] opacity-80">
        <div className="flex h-[78px] items-center justify-center bg-[#17202a] pr-[3px] text-[26px] font-bold tracking-[0.5px] text-white">Welcome</div>
        <div className="mt-[10px] h-[820px] border-[6px] border-white bg-[#17202a]" />
        <div className="flex h-[192px] items-start pl-[12px] pt-[20px]">
          <div className="h-[154px] w-[740px] border-2 border-white bg-white">
            <div className="flex h-[150px] w-[736px] items-center rounded-[4px] border-4 border-[#9dcbff] bg-[#2c3e50] pl-[5px] text-[28px] text-white">
              <span className="whitespace-nowrap tracking-[0.18px]">please create a simple 10 tooth gear</span>
              <span className="h-[32px] w-[2px] bg-black" />
            </div>
          </div>
          <div className="ml-[18px] flex h-[154px] w-[220px] items-center justify-center border-2 border-white bg-gradient-to-b from-[#b2b2b2] to-[#c3c3c3] pb-[4px] pr-[2px] text-[26px] font-bold tracking-[0.3px] text-black">Send</div>
        </div>
      </div>
    </div>
  );
}

export default function App() {
  return (
    <div className="relative flex h-[1800px] w-[2880px] flex-col overflow-hidden bg-gradient-to-b from-[#2b0d66] via-[#1b0846] to-[#08031c]">
      <MenuBar />
      <div className="h-px shrink-0 bg-[#120640]" />
      <FusionWindow />
      <NavBar />
      <ShareBar />
      {/* Drop shadow of the chat window, kept outside its translucent body */}
      <div className="absolute left-0 top-[50px] h-[1750px] w-[2880px] overflow-hidden">
        <div className="absolute left-[1880px] top-0 h-[1156px] w-[1000px] rounded-[20px] shadow-[0_36px_84px_0_rgba(0,0,0,0.42),0_0_3px_1px_rgba(0,0,0,0.22)]" />
      </div>
      <ChatWindow />
    </div>
  );
}
